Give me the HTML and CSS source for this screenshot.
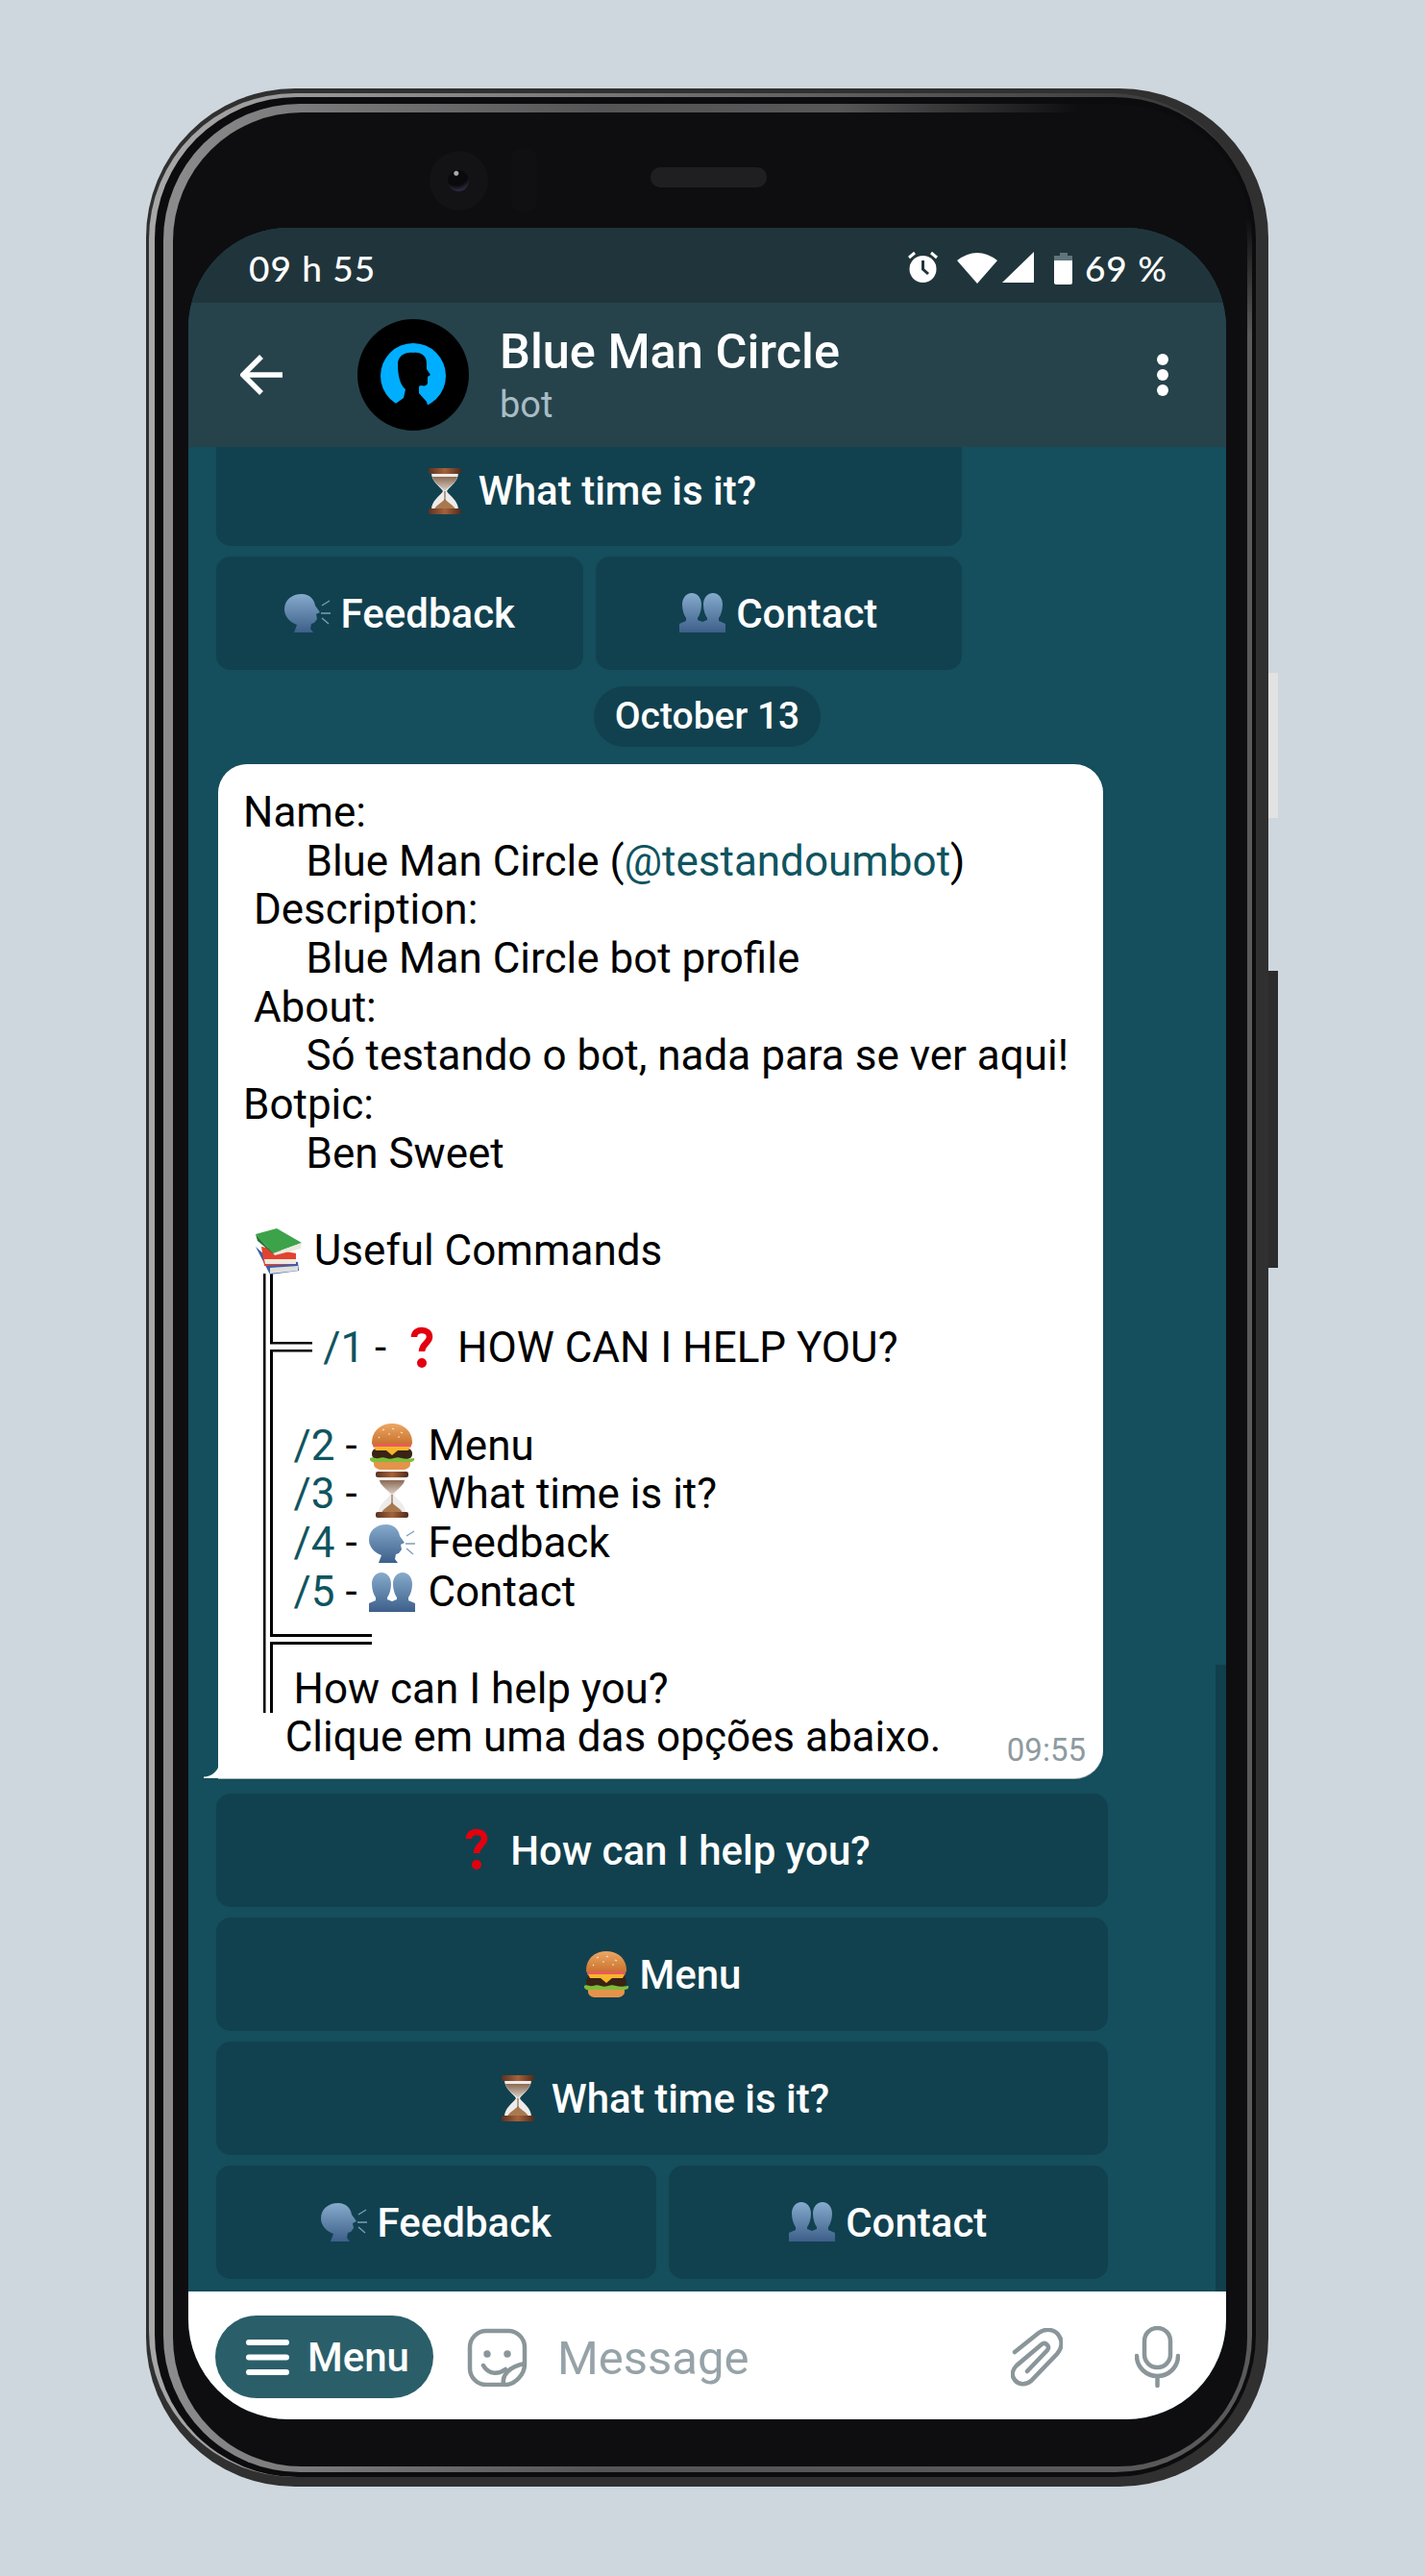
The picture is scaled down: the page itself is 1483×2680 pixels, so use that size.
FILE: index.html
```html
<!DOCTYPE html>
<html lang="en">
<head>
    <meta charset="UTF-8">
    <title>Blue Man Circle</title>
    <link rel="stylesheet" href="styles.css">
</head>
<body>
<!-- shared emoji drawings -->
<svg class="defs" width="0" height="0">
    <defs>
        <linearGradient id="bun" x1="0" y1="0" x2="0" y2="1"><stop offset="0" stop-color="#eda764"/><stop offset="1" stop-color="#c66f2a"/></linearGradient>
        <linearGradient id="skin" x1="0" y1="0" x2="0" y2="1"><stop offset="0" stop-color="#86abcc"/><stop offset="1" stop-color="#3d5f8a"/></linearGradient>
        <linearGradient id="sand" x1="0" y1="0" x2="0" y2="1"><stop offset="0" stop-color="#8a6a52"/><stop offset="1" stop-color="#dcd3ca"/></linearGradient>
        <linearGradient id="cap" x1="0" y1="0" x2="1" y2="0"><stop offset="0" stop-color="#5b3221"/><stop offset="0.5" stop-color="#a5623a"/><stop offset="1" stop-color="#4f2b1b"/></linearGradient>
        <symbol id="e-burger" viewBox="0 0 48 48">
            <path d="M3 20C3 7 13 0 24 0s21 7 21 20c0 2-1 3-3 3H6c-2 0-3-1-3-3z" fill="url(#bun)"/>
            <path d="M14 7l2-1M24 5l2 1M33 9l2 1M20 11l2 0M10 14l1 1M30 14l2 0" stroke="#f6e6c8" stroke-width="1.2"/>
            <rect x="4" y="21" width="40" height="4" rx="2" fill="#ea5a5e"/>
            <rect x="3" y="26" width="42" height="11" rx="5" fill="#3a2214"/>
            <path d="M5 24H43L41 28H30L24 33L18 28H7z" fill="#f5b62c"/>
            <path d="M1 36c3-2 5 1 9 0s5-1 8 0 5 1 8 0 5-1 8 0 7 1 13 0c1 3-2 4-4 4-3 1-5 1-8 1H12c-4 0-12 0-11-5z" fill="#7dbd3a"/>
            <path d="M5 40H43V42C43 46 39 48 35 48H13C9 48 5 46 5 42z" fill="#e5934a"/>
        </symbol>
        <symbol id="e-glass" viewBox="0 0 48 48">
            <path d="M10 5H38C38 14 29 19 26 24C29 29 38 34 38 43H10C10 34 19 29 22 24C19 19 10 14 10 5z" fill="#eeecea"/>
            <path d="M11 9H37C36 15 28 19 24 24C20 19 12 15 11 9z" fill="url(#sand)"/>
            <path d="M13 43C15 38 21 36 24 32C27 36 33 38 35 43z" fill="#a8794f"/>
            <rect x="23.4" y="24" width="1.2" height="10" fill="#8a6a50"/>
            <rect x="7" y="0" width="34" height="6" rx="2" fill="url(#cap)"/>
            <rect x="7" y="42" width="34" height="6" rx="2" fill="url(#cap)"/>
        </symbol>
        <symbol id="e-speak" viewBox="0 0 48 48">
            <path d="M0 20C0 10 8 4 18 4C26 4 31 9 32 16L37 23L33 25L34 30L31 34L28 35L27 40L30 44H10L13 36C5 33 0 27 0 20z" fill="url(#skin)"/>
            <path d="M39 16L47 11M38 24H48M39 29L46 35" stroke="#7d9dbd" stroke-width="1.4" fill="none"/>
        </symbol>
        <symbol id="e-busts" viewBox="0 0 48 48">
            <path d="M3 15C3 8 7 3 13 3C19 3 23 8 23 15C23 21 21 26 19 29V31L24 33L29 31V29C27 26 25 21 25 15C25 8 29 3 35 3C41 3 45 8 45 15C45 21 43 26 41 29V32L48 35V44H0V35L7 32V29C5 26 3 21 3 15z" fill="url(#skin)"/>
        </symbol>
        <symbol id="e-books" viewBox="0 0 48 48">
            <path d="M0 19L15 48L45 44L44 35L12 30z" fill="#3c5fa9"/>
            <path d="M15 41L44 39V44L15 47z" fill="#dfe0dc"/>
            <path d="M6 19L42 26V37L9 39z" fill="#e2432f"/>
            <path d="M9 32H42V37H10z" fill="#efe9df"/>
            <path d="M0 6L22 0L48 15L18 26z" fill="#3da34a"/>
            <path d="M18 26L48 15L47 21L20 28z" fill="#e9eadf"/>
            <path d="M0 6L18 26L20 28L2 13z" fill="#1f7a33"/>
        </symbol>
        <symbol id="e-quest" viewBox="0 0 48 48">
            <path d="M16 12C16 7 20 5 24 5C29 5 32 8 32 12C32 18 24 19 24 27" fill="none" stroke="#e3000f" stroke-width="6.5"/>
            <circle cx="24" cy="39" r="5" fill="#e3000f"/>
        </symbol>
    </defs>
</svg>

<div class="phone">
    <span class="side-btn side-silver"></span>
    <span class="side-btn side-black"></span>
    <div class="ring-light">
        <div class="ring-black">
            <div class="ring-gray">
                <div class="bezel">
                    <span class="camera"><i></i></span>
                    <span class="sensor"></span>
                    <span class="speaker"></span>

                    <div class="screen">
                        <div class="status-bar">
                            <span class="clock">09 h 55</span>
                            <div class="status-right">
                                <svg width="172" height="36" viewBox="0 0 172 36">
                                    <circle cx="16.500" cy="20" r="14" fill="#fff"/>
                                    <path d="M16.500 11V20L22 25" stroke="#20353b" stroke-width="3" fill="none"/>
                                    <path d="M2 8L8 3M31 8L25 3" stroke="#fff" stroke-width="3" fill="none"/>
                                    <path d="M52 11Q73-5 94 11L73 35z" fill="#fff"/>
                                    <path d="M132 2V34H99z" fill="#fff"/>
                                    <path d="M159 3H167V6H172V11H153V6H159z" fill="#60757b"/>
                                    <path d="M153 11H172V34C172 35 171 36 170 36H155C154 36 153 35 153 34z" fill="#fff"/>
                                </svg>
                                <span class="battery-pct">69 %</span>
                            </div>
                        </div>

                        <div class="header">
                            <svg class="back" width="44" height="42" viewBox="0 0 44 42">
                                <path d="M44 21H4M22 2L3 21L22 40" fill="none" stroke="#fff" stroke-width="5.500"/>
                            </svg>
                            <svg class="avatar" width="116" height="116" viewBox="0 0 116 116">
                                <circle cx="58" cy="58" r="58" fill="#000"/>
                                <circle cx="58" cy="59" r="34" fill="#00aeff"/>
                                <path d="M42 47C42 38 50 34 58 35C66 34 72 38 72 46L72 52L76 58L73 60L73 66C73 69 70 70 66 69L64 70L64 77L72 86L78 108H30L34 92L48 82L50 73C44 68 42 58 42 47z" fill="#000"/>
                            </svg>
                            <div class="chat-title">
                                <div class="name">Blue Man Circle</div>
                                <div class="sub">bot</div>
                            </div>
                            <div class="dots"><i></i><i></i><i></i></div>
                        </div>

                        <div class="chat">
                            <div class="keyboard keyboard-old">
                                <div class="kb-btn kb-wide kb-cut"><svg class="emoji"><use href="#e-glass"/></svg>What time is it?</div>
                                <div class="kb-btn"><svg class="emoji"><use href="#e-speak"/></svg>Feedback</div>
                                <div class="kb-btn"><svg class="emoji"><use href="#e-busts"/></svg>Contact</div>
                            </div>

                            <div class="date-pill">October 13</div>

                            <div class="bubble">
                                <svg class="tree" width="113" height="457" viewBox="0 0 113 457">
                                    <rect x="0" y="0" width="2.500" height="457"/>
                                    <rect x="7" y="0" width="3" height="73"/>
                                    <rect x="7" y="71" width="44" height="2.500"/>
                                    <rect x="7" y="79" width="44" height="2.500"/>
                                    <rect x="7" y="79" width="3" height="299"/>
                                    <rect x="7" y="375" width="106" height="3"/>
                                    <rect x="7" y="383" width="106" height="3"/>
                                    <rect x="7" y="383" width="3" height="74"/>
                                </svg>
<div class="msg-text">Name:
      Blue Man Circle (<a>@testandoumbot</a>)
 Description:
      Blue Man Circle bot profile
 About:
      Só testando o bot, nada para se ver aqui!
Botpic:
      Ben Sweet

 <svg class="emoji"><use href="#e-books"/></svg> Useful Commands

        <a class="cmd-first">/1</a> - <svg class="emoji"><use href="#e-quest"/></svg> HOW CAN I HELP YOU?

     <a class="cmd">/2</a> - <svg class="emoji"><use href="#e-burger"/></svg> Menu
     <a class="cmd">/3</a> - <svg class="emoji"><use href="#e-glass"/></svg> What time is it?
     <a class="cmd">/4</a> - <svg class="emoji"><use href="#e-speak"/></svg> Feedback
     <a class="cmd">/5</a> - <svg class="emoji"><use href="#e-busts"/></svg> Contact

     <span class="cmd">How can I help you?</span>
    Clique em uma das opções abaixo.</div>
                                <span class="time">09:55</span>
                            </div>

                            <div class="keyboard keyboard-new">
                                <div class="kb-btn kb-wide"><svg class="emoji"><use href="#e-quest"/></svg>How can I help you?</div>
                                <div class="kb-btn kb-wide"><svg class="emoji"><use href="#e-burger"/></svg>Menu</div>
                                <div class="kb-btn kb-wide"><svg class="emoji"><use href="#e-glass"/></svg>What time is it?</div>
                                <div class="kb-btn"><svg class="emoji"><use href="#e-speak"/></svg>Feedback</div>
                                <div class="kb-btn"><svg class="emoji"><use href="#e-busts"/></svg>Contact</div>
                            </div>
                            <span class="scrollbar"></span>
                        </div>

                        <div class="input-bar">
                            <div class="menu-pill">
                                <svg width="45" height="37" viewBox="0 0 45 37">
                                    <path d="M3 3H42M3 18.500H42M3 34H42" stroke="#fff" stroke-width="6" stroke-linecap="round"/>
                                </svg>
                                <span>Menu</span>
                            </div>
                            <svg class="ic-sticker" width="63" height="61" viewBox="0 0 63 61">
                                <g fill="none" stroke="#8a9699" stroke-width="4.500">
                                    <path d="M40 59H20A17 17 0 0 1 3 42V20A17 17 0 0 1 20 3H43A17 17 0 0 1 60 20V38C60 48 50 59 40 59z"/>
                                    <path d="M38 59C36 49 44 40 60 37"/>
                                    <path d="M17 39C22 48 32 49 40 43" stroke-linecap="round"/>
                                </g>
                                <circle cx="21" cy="27" r="3.700" fill="#8a9699"/>
                                <circle cx="42" cy="27" r="3.700" fill="#8a9699"/>
                            </svg>
                            <div class="placeholder">Message</div>
                            <svg class="ic-clip" width="54" height="61" viewBox="0 0 54 61">
                                <path d="M4 25L29 5C36 0 46 1 50 8C54 14 53 21 48 27L21 55C15 60 8 59 4 54C0 49 2 43 6 39L32 17C36 14 41 19 38 23L17 45" fill="none" stroke="#8a9699" stroke-width="4.500" stroke-linecap="round"/>
                            </svg>
                            <svg class="ic-mic" width="47" height="64" viewBox="0 0 47 64">
                                <g fill="none" stroke="#8a9699" stroke-width="4.500" stroke-linecap="round">
                                    <rect x="10" y="2" width="27" height="41" rx="13.500"/>
                                    <path d="M2 31C2 43 12 52 23.500 52S45 43 45 31"/>
                                    <path d="M23.500 52V62"/>
                                </g>
                            </svg>
                        </div>
                    </div>
                </div>
            </div>
        </div>
    </div>
</div>
</body>
</html>
```

FILE: styles.css
```css
*{
    margin: 0;
    padding: 0;
    box-sizing: border-box;
}
html,body{
    height: 2680px;
    overflow: hidden;
}
body{
    background: #cfd7de;
    padding: 92px 0 0 152px;
    font-family: Roboto, "Noto Sans", sans-serif;
}
i{
    display: block;
}
.defs{
    position: absolute;
}

/* phone body, ring by ring from the outside in */
.phone{
    position: relative;
    width: 1168px;
    height: 2495px;
    padding: 5px 13px 10px 3px;
    border-radius: 155px;
    background: #303030;
}
.ring-light{
    height: 100%;
    padding: 4px 0 0 6px;
    border-radius: 152px;
    background: linear-gradient(90deg, #a8a8a8, #6c6c6c 50%, #333 100%);
}
.ring-black{
    height: 100%;
    padding: 7px 4px 5px 9px;
    border-radius: 148px;
    background: #0c0c0e;
}
.ring-gray{
    height: 100%;
    padding: 9px 5px 6px 10px;
    border-radius: 142px;
    background:
        linear-gradient(180deg, #0e0e10 120px, transparent 240px) no-repeat right top / 170px 240px,
        linear-gradient(90deg, transparent 62%, #0e0e10 84%) no-repeat top / 100% 9px,
        linear-gradient(90deg, #8c8c8c, #555 40%, #5a5a5a);
}
.bezel{
    position: relative;
    height: 100%;
    padding: 120px 22px 49px 16px;
    border-radius: 134px;
    background: #0e0e10;
}
.side-btn{
    position: absolute;
    left: 1168px;
    width: 10px;
}
.side-silver{
    top: 608px;
    height: 151px;
    background: #e2e2e2;
}
.side-black{
    top: 918px;
    height: 309px;
    background: #2b2b2b;
}
.camera{
    position: absolute;
    left: 267px;
    top: 40px;
    width: 61px;
    height: 62px;
    border-radius: 50%;
    background: #131315;
}
.camera i{
    width: 22px;
    height: 22px;
    margin: 20px 0 0 19px;
    border-radius: 50%;
    background: radial-gradient(circle at 40% 15%, #aaa 0 2px, #0a0a0c 3px 55%, #33334d 85%);
}
.sensor{
    position: absolute;
    left: 352px;
    top: 38px;
    width: 27px;
    height: 65px;
    border-radius: 10px;
    background: #101012;
}
.speaker{
    position: absolute;
    left: 497px;
    top: 57px;
    width: 121px;
    height: 21px;
    border-radius: 10px;
    background: #1f1f21;
}

/* screen */
.screen{
    display: flex;
    flex-direction: column;
    height: 100%;
    overflow: hidden;
    border-radius: 104px;
    background: #154e5c;
}
.status-bar{
    flex: none;
    display: flex;
    align-items: center;
    justify-content: space-between;
    height: 78px;
    padding: 4px 61px 0 63px;
    background: #20353b;
    color: #fff;
    font-family: Lato, Roboto, sans-serif;
    font-size: 37px;
    font-weight: 500;
    letter-spacing: 1px;
}
.status-right{
    display: flex;
    align-items: center;
    gap: 13px;
    margin-left: auto;
}
.header{
    flex: none;
    display: flex;
    align-items: center;
    height: 150px;
    padding: 0 60px 0 54px;
    background: #26434c;
    color: #fff;
}
.avatar{
    margin-left: 78px;
}
.chat-title{
    flex: 1;
    margin-left: 32px;
}
.name{
    font-size: 50.500px;
    font-weight: 500;
    line-height: 58px;
}
.sub{
    margin-top: 3px;
    font-size: 38px;
    line-height: 46px;
    color: #a8bdc4;
}
.dots{
    display: flex;
    flex-direction: column;
    gap: 4px;
}
.dots i{
    width: 12px;
    height: 12px;
    border-radius: 50%;
    background: #fff;
}

/* chat area */
.chat{
    position: relative;
    flex: 1;
    display: flex;
    flex-direction: column;
    min-height: 0;
}
.keyboard{
    display: grid;
    grid-template-columns: 1fr 1fr;
    gap: 11px 13px;
    margin-left: 29px;
}
.keyboard-old{
    width: 776px;
}
.keyboard-new{
    width: 928px;
    margin-top: 16px;
}
.kb-btn{
    display: flex;
    align-items: center;
    justify-content: center;
    gap: 11px;
    height: 118px;
    border-radius: 15px;
    background: #11414f;
    color: #fff;
    font-size: 42px;
    font-weight: 500;
}
.kb-wide{
    grid-column: span 2;
}
.kb-cut{
    height: 103px;
    padding-bottom: 12px;
    border-radius: 0 0 15px 15px;
}
.emoji{
    flex: none;
    width: 48px;
    height: 48px;
    vertical-align: -10px;
}
.date-pill{
    align-self: center;
    width: 236px;
    height: 63px;
    margin: 17px 0 18px;
    border-radius: 32px;
    background: #11414f;
    color: #fff;
    font-size: 39px;
    font-weight: 500;
    line-height: 63px;
    text-align: center;
}
.bubble{
    position: relative;
    width: 921px;
    height: 1055px;
    margin-left: 31px;
    padding: 25px 0 0 26px;
    border-radius: 30px 30px 30px 0;
    background: #fff;
    box-shadow: 0 1px 0 #a9b5b8;
}
.bubble::before{
    content: "";
    position: absolute;
    left: -15px;
    bottom: 0;
    width: 16px;
    height: 18px;
    background: radial-gradient(circle at 0 0, transparent 16px, #fff 17px);
}
.msg-text{
    position: relative;
    white-space: pre;
    font-size: 44px;
    line-height: 50.65px;
    color: #000;
}
.msg-text a{
    color: #0f5460;
}
.msg-text .emoji{
    margin: 0 2px;
}
.msg-text .cmd{
    margin-left: -2px;
}
.msg-text .cmd-first{
    margin-left: -4px;
}
.tree{
    position: absolute;
    left: 47px;
    top: 530px;
    fill: #000;
}
.time{
    position: absolute;
    right: 18px;
    bottom: 10px;
    font-size: 33px;
    color: #8e9aa0;
}
.scrollbar{
    position: absolute;
    right: 0;
    bottom: 0;
    width: 11px;
    height: 652px;
    background: #113f4c;
}

/* bottom bar */
.input-bar{
    flex: none;
    display: flex;
    align-items: center;
    height: 133px;
    padding: 3px 48px 0 28px;
    background: #fff;
}
.menu-pill{
    display: flex;
    align-items: center;
    gap: 19px;
    width: 227px;
    height: 86px;
    padding-left: 32px;
    border-radius: 43px;
    background: #2a5f6a;
    color: #fff;
    font-size: 42px;
    font-weight: 500;
}
.ic-sticker{
    margin-left: 35px;
}
.placeholder{
    flex: 1;
    margin-left: 31px;
    padding-top: 3px;
    font-size: 49px;
    color: #96a3a8;
}
.ic-mic{
    margin-left: 75px;
}
```
